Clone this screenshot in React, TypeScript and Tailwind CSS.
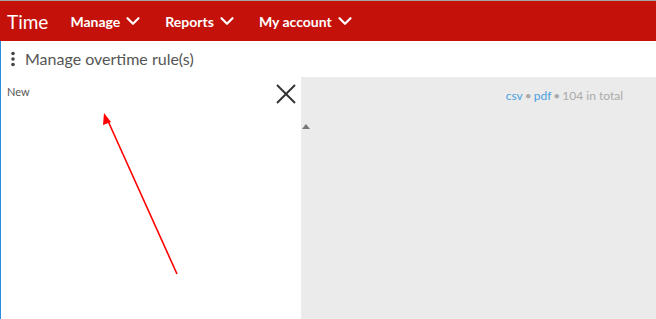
import { ChevronDown } from "lucide-react"

const navItems = ["Manage", "Reports", "My account"]

export default function App() {
  return (
    <div
      className="relative flex h-[319px] w-[656px] flex-col overflow-hidden border-t border-[#a3a3a3] bg-white"
      style={{ fontFamily: "Lato, 'Open Sans', sans-serif" }}
    >
      {/* top bar */}
      <header className="flex h-[40px] shrink-0 items-center bg-[#c4110a] text-white">
        <span className="ml-[7px] text-[19px] leading-none">Time</span>
        <nav className="ml-[22px] flex items-center gap-[21px]">
          {navItems.map((item) => (
            <span key={item} className="flex items-center gap-[2px] text-[14px] font-bold">
              {item}
              <ChevronDown size={22} strokeWidth={2.4} />
            </span>
          ))}
        </nav>
      </header>

      <div className="flex min-h-0 flex-1 flex-col border-l border-[#2b8fe0]">
        {/* page title */}
        <div className="flex h-[36px] shrink-0 items-center gap-[9px] pl-[9px] text-[#555]">
          <svg width="6" height="16" viewBox="0 0 6 16" fill="#444">
            <circle cx="3" cy="2.5" r="1.8" />
            <circle cx="3" cy="8" r="1.8" />
            <circle cx="3" cy="13.5" r="1.8" />
          </svg>
          <span className="text-[16px]">Manage overtime rule(s)</span>
        </div>

        <div className="flex min-h-0 flex-1">
          {/* editor panel */}
          <div className="flex w-[300px] shrink-0 items-start justify-between pl-[6px] pr-[6px] pt-[7px]">
            <span className="text-[11px] text-[#555]">New</span>
            <svg width="20" height="20" viewBox="0 0 20 20" stroke="#333" strokeWidth="2" className="mr-[-1px]">
              <line x1="1" y1="1" x2="19" y2="19" />
              <line x1="19" y1="1" x2="1" y2="19" />
            </svg>
          </div>

          {/* list panel */}
          <div className="relative flex-1 bg-[#ebebeb]">
            <div className="flex justify-end gap-[2px] pr-[33px] pt-[10px] text-[12px] text-[#aaa]">
              <span className="text-[#4a9fe0]">csv</span>
              <span>•</span>
              <span className="text-[#4a9fe0]">pdf</span>
              <span>•</span>
              <span>104 in total</span>
            </div>
            <div className="ml-[1px] mt-[19px] h-0 w-0 border-x-[4px] border-b-[5px] border-x-transparent border-b-[#777]" />
          </div>
        </div>
      </div>

      {/* annotation arrow */}
      <svg className="pointer-events-none absolute left-0 top-0" width="656" height="319">
        <line x1="177" y1="273" x2="108" y2="120" stroke="#f00" strokeWidth="1.6" />
        <polygon points="104,112 103,124 111,121" fill="#f00" />
      </svg>
    </div>
  )
}
